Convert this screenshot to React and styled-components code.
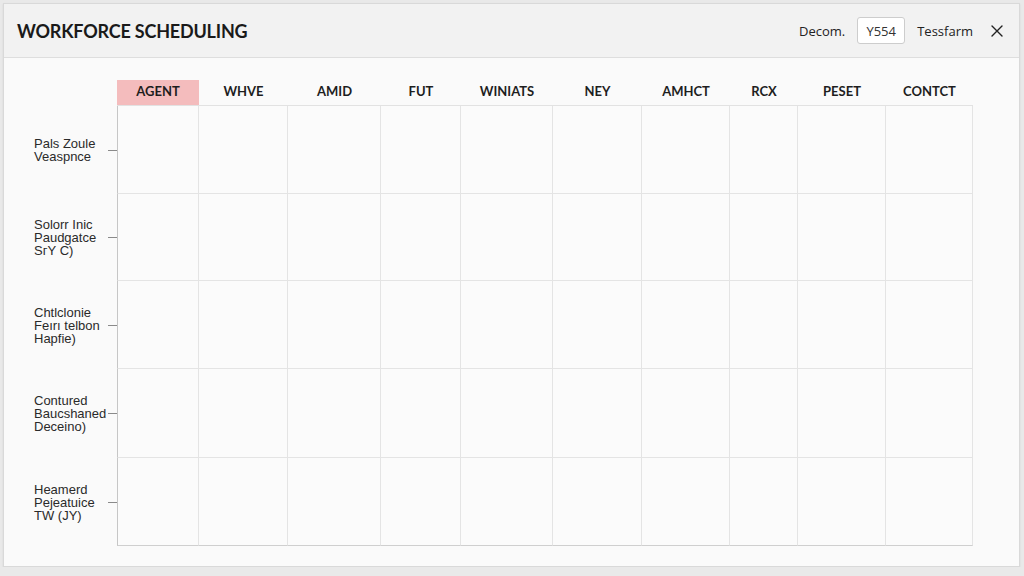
import React from "react";
import styled, { createGlobalStyle } from "styled-components";

const Global = createGlobalStyle`
  html, body { margin: 0; padding: 0; background: #e9e9e9; }
  body { font-family: "Open Sans", "Liberation Sans", sans-serif; }
  * { box-sizing: border-box; }
`;

const Panel = styled.div`
  margin: 3px 0 0 3px;
  width: 1017px;
  height: 564px;
  background: #fafafa;
  border: 1px solid #d9d9d9;
  box-shadow: 0 1px 2px rgba(0,0,0,0.08);
  display: flex;
  flex-direction: column;
`;

const Header = styled.header`
  height: 54px;
  flex: none;
  background: #f2f2f2;
  border-bottom: 1px solid #dedede;
  display: flex;
  align-items: center;
  padding: 0 15px 0 13px;
`;

const Title = styled.h1`
  margin: 0;
  font-family: Lato, "Liberation Sans", sans-serif;
  font-weight: 700;
  font-size: 18px;
  letter-spacing: -0.2px;
  color: #1a1a1a;
  flex: 1;
  padding-top: 1px;
`;

const Tools = styled.div`
  display: flex;
  align-items: center;
  gap: 12px;
  font-size: 13px;
  color: #222;
`;

const ToolText = styled.span`
  font-size: 13px;
  color: #222;
`;

const ValueBox = styled.div`
  width: 48px;
  height: 27px;
  border: 1px solid #cdcdcd;
  border-radius: 3px;
  background: #fff;
  display: flex;
  align-items: center;
  justify-content: center;
  font-size: 13px;
  color: #333;
`;

const CloseButton = styled.button`
  margin-left: 5px;
  border: 0;
  background: none;
  padding: 0;
  width: 14px;
  height: 14px;
  display: flex;
  align-items: center;
  justify-content: center;
  cursor: pointer;
`;

const Body = styled.div`
  flex: 1;
  padding-top: 22px;
`;

const widths = [82, 89, 93, 80, 92, 89, 88, 68, 88, 87];
const rowHeights = [88, 87, 88, 89, 88];

const Grid = styled.div`
  display: grid;
  grid-template-columns: 113px ${widths.map((w) => w + "px").join(" ")};
  grid-template-rows: 26px ${rowHeights.map((h) => h + "px").join(" ")};
`;

const Corner = styled.div``;

const ColHead = styled.div`
  display: flex;
  align-items: center;
  justify-content: center;
  font-family: Lato, "Liberation Sans", sans-serif;
  font-weight: 700;
  font-size: 13px;
  color: #1e1e1e;
  border-bottom: 1px solid #e2e2e2;
  background: ${(p) => (p.$active ? "#f4bcbd" : "transparent")};
  padding-bottom: 3px;
`;

const RowLabel = styled.div`
  display: flex;
  align-items: center;
  padding-left: 30px;
  font-family: "Liberation Sans", Arial, sans-serif;
  font-size: 13px;
  line-height: 13px;
  color: #2a2a2a;
`;

const LabelText = styled.div`
  flex: 1;
  white-space: pre-line;
`;

const Tick = styled.span`
  width: 9px;
  height: 1px;
  background: #8a8a8a;
  flex: none;
`;

const Cell = styled.div`
  background: #fbfbfb;
  border-right: 1px solid #e4e4e4;
  border-bottom: 1px solid ${(p) => (p.$last ? "#cfcfcf" : "#e4e4e4")};
  border-left: ${(p) => (p.$first ? "1px solid #c6c6c6" : "0")};
`;

const columns = ["AGENT", "WHVE", "AMID", "FUT", "WINIATS", "NEY", "AMHCT", "RCX", "PESET", "CONTCT"];
const rows = [
  "Pals Zoule\nVeaspnce",
  "Solorr Inic\nPaudgatce\nS\u0433Y\u00A0C)",
  "Chtlclonie\nFeırı telbon\nHapfie)",
  "Contured\nBaucshaned\nDeceino)",
  "Heamerd\nPejeatuice\nTW (JY)",
];

export default function App() {
  return (
    <>
      <Global />
      <Panel>
        <Header>
          <Title>WORKFORCE SCHEDULING</Title>
          <Tools>
            <ToolText>Decom.</ToolText>
            <ValueBox>Y554</ValueBox>
            <ToolText>Tessfarm</ToolText>
            <CloseButton aria-label="close">
              <svg width="12" height="12" viewBox="0 0 12 12">
                <path d="M1 1 L11 11 M11 1 L1 11" stroke="#222" strokeWidth="1.4" strokeLinecap="round" />
              </svg>
            </CloseButton>
          </Tools>
        </Header>
        <Body>
          <Grid>
            <Corner />
            {columns.map((c, i) => (
              <ColHead key={c} $active={i === 0}>{c}</ColHead>
            ))}
            {rows.map((r, ri) => (
              <React.Fragment key={ri}>
                <RowLabel>
                  <LabelText>{r}</LabelText>
                  <Tick />
                </RowLabel>
                {columns.map((c, ci) => (
                  <Cell key={c} $first={ci === 0} $last={ri === rows.length - 1} />
                ))}
              </React.Fragment>
            ))}
          </Grid>
        </Body>
      </Panel>
    </>
  );
}
